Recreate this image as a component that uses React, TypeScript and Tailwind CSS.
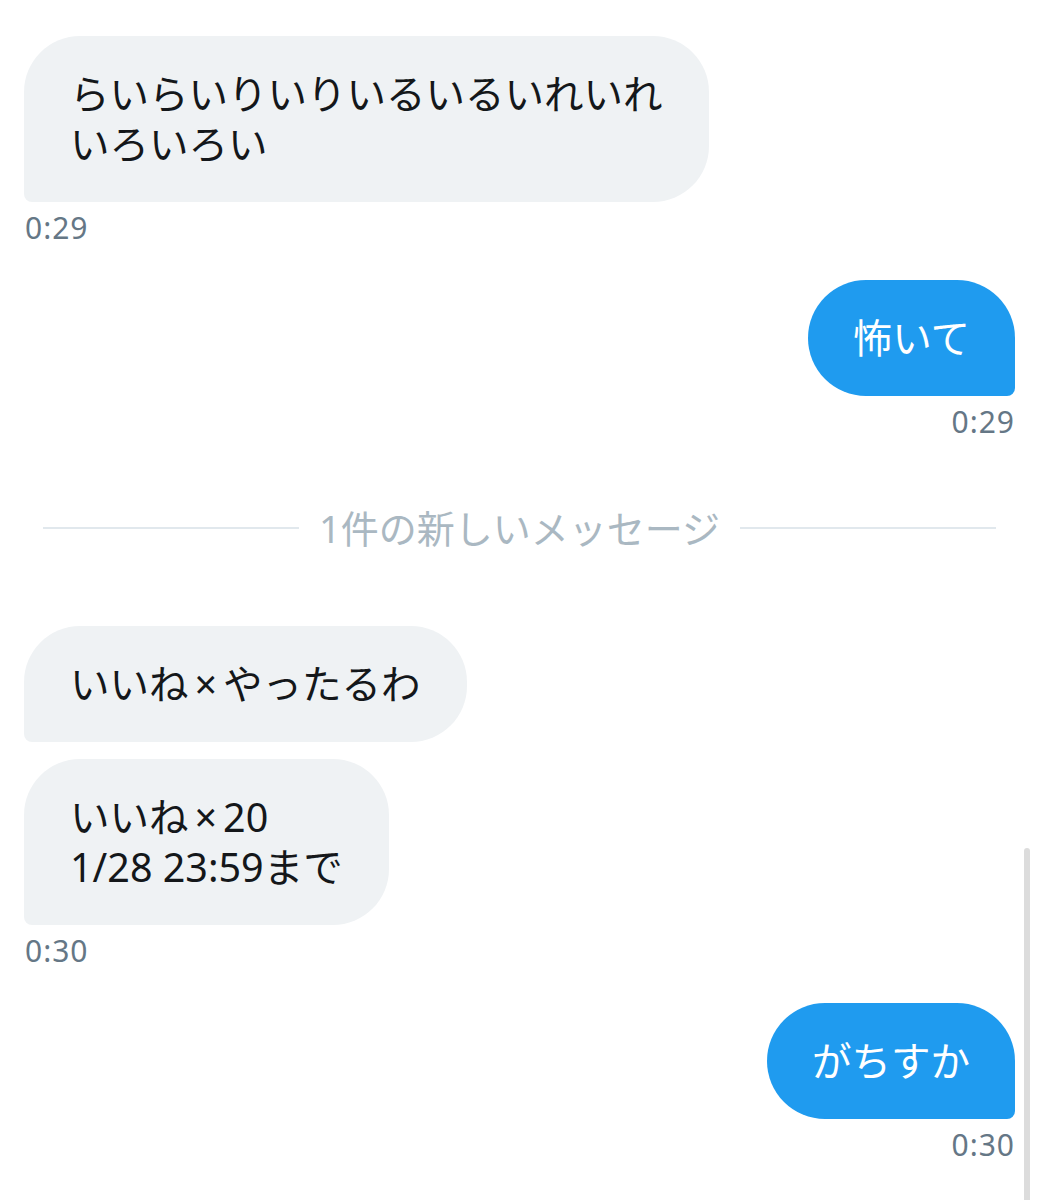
const FONT = "font-['Noto_Sans','Noto_Sans_CJK_JP',sans-serif]";

function Stamp({ time, right }: { time: string; right?: boolean }) {
  return (
    <div
      className={`mt-[8px] h-[36px] font-['Noto_Sans',sans-serif] text-[30px] leading-[36px] tracking-[1px] text-[#657786] ${
        right ? "text-right" : "pl-[1px]"
      }`}
    >
      {time}
    </div>
  );
}

// × gets a little air on both sides, as in the app
function Line({ text }: { text: string }) {
  const parts = text.split("×");
  return (
    <div className="h-[50px] whitespace-nowrap leading-[50px]">
      {parts.map((part, i) => (
        <span key={i}>
          {i > 0 ? <span className="px-[6px]">×</span> : null}
          {part}
        </span>
      ))}
    </div>
  );
}

function Received({ lines, className = "" }: { lines: string[]; className?: string }) {
  return (
    <div className={`flex ${className}`}>
      <div className="rounded-[56px] rounded-bl-[8px] bg-[#eff2f4] px-[46px] py-[33px] text-[39.5px] text-[#14171a]">
        {lines.map((line) => (
          <Line key={line} text={line} />
        ))}
      </div>
    </div>
  );
}

function Sent({ lines, className = "" }: { lines: string[]; className?: string }) {
  return (
    <div className={`flex justify-end ${className}`}>
      <div className="rounded-[58px] rounded-br-[8px] bg-[#1f9bef] px-[45px] py-[33px] text-[39.5px] text-white">
        {lines.map((line) => (
          <Line key={line} text={line} />
        ))}
      </div>
    </div>
  );
}

export default function App() {
  return (
    <div className={`relative h-[1200px] w-[1039px] overflow-hidden bg-white ${FONT}`}>
      <div className="px-[24px] pt-[36px]">
        <Received lines={["らいらいりいりいるいるいれいれ", "いろいろい"]} />
        <Stamp time="0:29" />

        <Sent className="mt-[34px]" lines={["怖いて"]} />
        <Stamp time="0:29" right />

        {/* 新着の区切り */}
        <div className="mt-[58px] flex h-[60px] items-center gap-[20px] px-[19px]">
          <div className="h-[2px] flex-1 bg-[#e1e8ed]" />
          <span className="text-[38px] leading-[60px] text-[#aab8c2]">1件の新しいメッセージ</span>
          <div className="h-[2px] flex-1 bg-[#e1e8ed]" />
        </div>

        <Received className="mt-[68px]" lines={["いいね×やったるわ"]} />
        <Received className="mt-[17px]" lines={["いいね×20", "1/28 23:59まで"]} />
        <Stamp time="0:30" />

        <Sent className="mt-[34px]" lines={["がちすか"]} />
        <Stamp time="0:30" right />
      </div>

      {/* scroll indicator */}
      <div className="absolute right-[9px] top-[848px] h-[400px] w-[6px] rounded-full bg-[#dcdcdc]" />
    </div>
  );
}
